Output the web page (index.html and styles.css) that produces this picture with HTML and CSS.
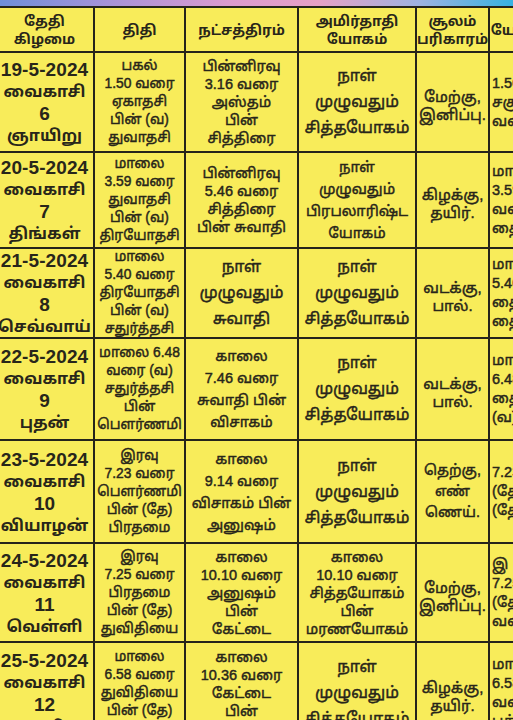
FILE: index.html
```html
<!DOCTYPE html>
<html lang="ta">
<head>
<meta charset="utf-8">
<title>வைகாசி பஞ்சாங்கம்</title>
<link rel="stylesheet" href="styles.css">
</head>
<body>
<div class="strip"></div>
<div class="sheet">
  <div class="cell head"><span>தேதி</span><span>கிழமை</span></div>
  <div class="cell head"><span>திதி</span></div>
  <div class="cell head"><span>நட்சத்திரம்</span></div>
  <div class="cell head"><span>அமிர்தாதி</span><span>யோகம்</span></div>
  <div class="cell head"><span>சூலம்</span><span>பரிகாரம்</span></div>
  <div class="cell head"><span>யோகம்</span></div>

  <div class="cell day"><span class="date">19-5-2024</span><span>வைகாசி</span><span class="num">6</span><span>ஞாயிறு</span></div>
  <div class="cell txt ti"><span>பகல்</span><span>1.50 வரை</span><span>ஏகாதசி</span><span>பின் (வ)</span><span>துவாதசி</span></div>
  <div class="cell txt"><span>பின்னிரவு</span><span>3.16 வரை</span><span>அஸ்தம்</span><span>பின்</span><span>சித்திரை</span></div>
  <div class="cell txt loose"><span>நாள்</span><span>முழுவதும்</span><span>சித்தயோகம்</span></div>
  <div class="cell txt dir"><span>மேற்கு,</span><span>இனிப்பு.</span></div>
  <div class="cell txt side"><span>1.50 வரை</span><span>சகுனி</span><span>வணிசை</span></div>

  <div class="cell day"><span class="date">20-5-2024</span><span>வைகாசி</span><span class="num">7</span><span>திங்கள்</span></div>
  <div class="cell txt ti"><span>மாலை</span><span>3.59 வரை</span><span>துவாதசி</span><span>பின் (வ)</span><span>திரயோதசி</span></div>
  <div class="cell txt"><span>பின்னிரவு</span><span>5.46 வரை</span><span>சித்திரை</span><span>பின் சுவாதி</span></div>
  <div class="cell txt mid"><span>நாள்</span><span>முழுவதும்</span><span>பிரபலாரிஷ்ட</span><span>யோகம்</span></div>
  <div class="cell txt dir"><span>கிழக்கு,</span><span>தயிர்.</span></div>
  <div class="cell txt side"><span>மா</span><span>3.59 வரை</span><span>வணிசை</span><span>தைதுலம் வரை</span></div>

  <div class="cell day"><span class="date">21-5-2024</span><span>வைகாசி</span><span class="num">8</span><span>செவ்வாய்</span></div>
  <div class="cell txt ti"><span>மாலை</span><span>5.40 வரை</span><span>திரயோதசி</span><span>பின் (வ)</span><span>சதுர்த்தசி</span></div>
  <div class="cell txt loose"><span>நாள்</span><span>முழுவதும்</span><span>சுவாதி</span></div>
  <div class="cell txt loose"><span>நாள்</span><span>முழுவதும்</span><span>சித்தயோகம்</span></div>
  <div class="cell txt dir"><span>வடக்கு,</span><span>பால்.</span></div>
  <div class="cell txt side"><span>மா</span><span>5.40 வரை</span><span>தைதுலம் வரை</span><span>தைதுலம் வரை</span></div>

  <div class="cell day"><span class="date">22-5-2024</span><span>வைகாசி</span><span class="num">9</span><span>புதன்</span></div>
  <div class="cell txt ti"><span>மாலை 6.48</span><span>வரை (வ)</span><span>சதுர்த்தசி</span><span>பின்</span><span>பௌர்ணமி</span></div>
  <div class="cell txt mid"><span>காலை</span><span>7.46 வரை</span><span>சுவாதி பின்</span><span>விசாகம்</span></div>
  <div class="cell txt loose"><span>நாள்</span><span>முழுவதும்</span><span>சித்தயோகம்</span></div>
  <div class="cell txt dir"><span>வடக்கு,</span><span>பால்.</span></div>
  <div class="cell txt side"><span>மா</span><span>6.48 வரை</span><span>தைதுலம் வரை</span><span>(வ) பவம்</span></div>

  <div class="cell day"><span class="date">23-5-2024</span><span>வைகாசி</span><span class="num">10</span><span>வியாழன்</span></div>
  <div class="cell txt ti"><span>இரவு</span><span>7.23 வரை</span><span>பௌர்ணமி</span><span>பின் (தே)</span><span>பிரதமை</span></div>
  <div class="cell txt mid"><span>காலை</span><span>9.14 வரை</span><span>விசாகம் பின்</span><span>அனுஷம்</span></div>
  <div class="cell txt loose"><span>நாள்</span><span>முழுவதும்</span><span>சித்தயோகம்</span></div>
  <div class="cell txt dir3"><span>தெற்கு,</span><span>எண்</span><span>ணெய்.</span></div>
  <div class="cell txt side"><span>7.23 வரை</span><span>(தே) பவம்</span><span>(தே) பாலவம்</span></div>

  <div class="cell day"><span class="date">24-5-2024</span><span>வைகாசி</span><span class="num">11</span><span>வெள்ளி</span></div>
  <div class="cell txt ti"><span>இரவு</span><span>7.25 வரை</span><span>பிரதமை</span><span>பின் (தே)</span><span>துவிதியை</span></div>
  <div class="cell txt"><span>காலை</span><span>10.10 வரை</span><span>அனுஷம்</span><span>பின்</span><span>கேட்டை</span></div>
  <div class="cell txt"><span>காலை</span><span>10.10 வரை</span><span>சித்தயோகம்</span><span>பின்</span><span>மரணயோகம்</span></div>
  <div class="cell txt dir"><span>மேற்கு,</span><span>இனிப்பு.</span></div>
  <div class="cell txt side"><span>இ</span><span>7.25 வரை</span><span>(தே) பவம்</span><span>வணிசை வரை</span></div>

  <div class="cell day"><span class="date">25-5-2024</span><span>வைகாசி</span><span class="num">12</span><span>சனி</span></div>
  <div class="cell txt ti"><span>மாலை</span><span>6.58 வரை</span><span>துவிதியை</span><span>பின் (தே)</span><span>திருதியை</span></div>
  <div class="cell txt"><span>காலை</span><span>10.36 வரை</span><span>கேட்டை</span><span>பின்</span><span>மூலம்</span></div>
  <div class="cell txt loose"><span>நாள்</span><span>முழுவதும்</span><span>சித்தயோகம்</span></div>
  <div class="cell txt dir"><span>கிழக்கு,</span><span>தயிர்.</span></div>
  <div class="cell txt side"><span>மா</span><span>6.58 வரை</span><span>வணிசை</span><span>பத்திரை</span></div>
</div>
</body>
</html>
```

FILE: styles.css
```css
html, body {
  margin: 0;
  padding: 0;
  width: 513px;
  height: 720px;
  overflow: hidden;
  background: #f8ec5a;
}

body {
  font-family: "Liberation Sans", "Noto Sans Tamil", "Noto Sans", sans-serif;
  color: #28261a;
}

.strip {
  height: 6px;
  background: linear-gradient(90deg, #6f8fd9 0%, #a993d8 22%, #dc9bcf 45%, #e6a0c6 62%, #9db3e0 82%, #36b2e2 100%);
}

.sheet {
  display: grid;
  grid-template-columns: 97px 89px 111px 116px 71px 62px;
  grid-template-rows: 43px 98px 94px 88px 100px 101px 97px 100px;
  gap: 2px;
  padding-top: 2px;
  margin-left: -4px;
  width: max-content;
  background: #25241b;
}

.cell {
  background: #f8ec5a;
  display: flex;
  flex-direction: column;
  align-items: center;
  justify-content: center;
  text-align: center;
  white-space: nowrap;
  overflow: hidden;
}

.cell span {
  display: block;
}

.head {
  font-size: 14px;
  font-weight: 700;
  line-height: 18px;
}

.day {
  font-size: 16px;
  font-weight: 700;
  line-height: 22px;
  padding-top: 2px;
}

.day .date {
  font-size: 19px;
  letter-spacing: 0.1px;
}

.day .num {
  font-size: 19px;
}

.txt {
  font-size: 14.5px;
  line-height: 18px;
  -webkit-text-stroke: 0.45px #28261a;
}

.ti {
  font-size: 13.8px;
}

.loose {
  line-height: 26px;
  font-size: 16px;
}

.mid {
  line-height: 22px;
}

.dir {
  line-height: 18px;
  font-size: 15px;
  padding-top: 8px;
}

.dir3 {
  line-height: 21px;
}

.side {
  align-items: flex-start;
  padding-left: 2px;
  line-height: 19px;
  gap: 0;
}
```
